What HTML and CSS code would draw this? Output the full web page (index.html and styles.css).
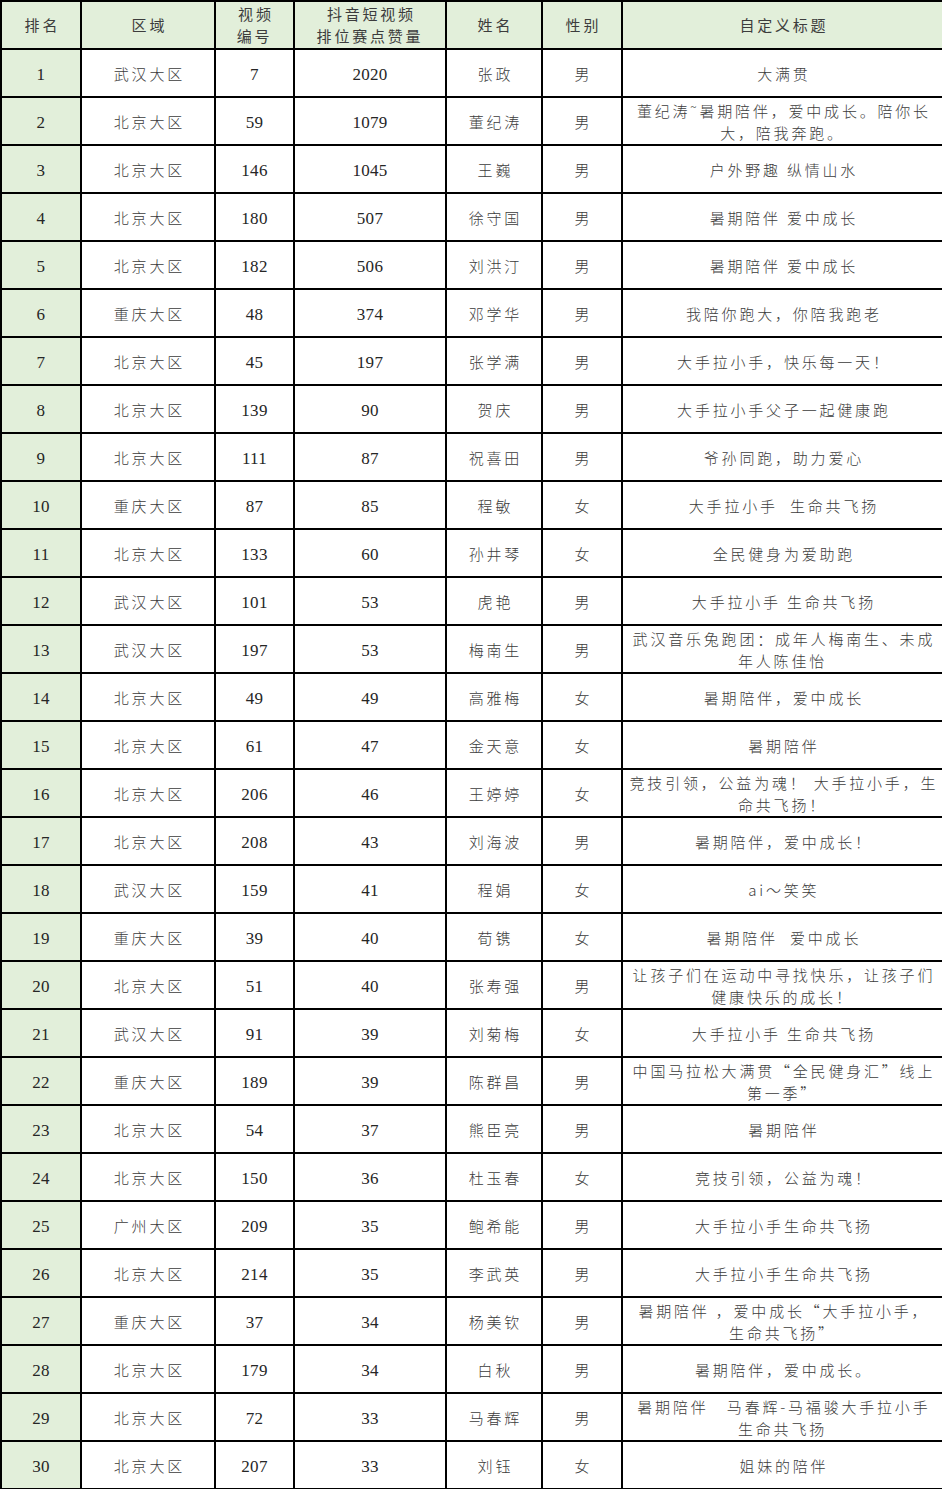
FILE: index.html
```html
<!DOCTYPE html>
<html lang="zh-CN">
<head>
<meta charset="utf-8">
<title>抖音短视频排位赛点赞量</title>
<link rel="stylesheet" href="styles.css">
</head>
<body>
<table class="rank-table">
<colgroup>
<col class="c-rank"><col class="c-region"><col class="c-vid"><col class="c-likes"><col class="c-name"><col class="c-sex"><col class="c-title">
</colgroup>
<thead>
<tr class="head-row">
<th class="cjk">排名</th><th class="cjk">区域</th><th class="cjk">视频<br>编号</th><th class="cjk">抖音短视频<br>排位赛点赞量</th><th class="cjk">姓名</th><th class="cjk">性别</th><th class="cjk">自定义标题</th>
</tr>
</thead>
<tbody>
<tr><td class="num rank">1</td><td class="cjk">武汉大区</td><td class="num">7</td><td class="num">2020</td><td class="cjk">张政</td><td class="cjk">男</td><td class="cjk title">大满贯</td></tr>
<tr><td class="num rank">2</td><td class="cjk">北京大区</td><td class="num">59</td><td class="num">1079</td><td class="cjk">董纪涛</td><td class="cjk">男</td><td class="cjk title">董纪涛˜暑期陪伴，爱中成长。陪你长<br>大，陪我奔跑。</td></tr>
<tr><td class="num rank">3</td><td class="cjk">北京大区</td><td class="num">146</td><td class="num">1045</td><td class="cjk">王巍</td><td class="cjk">男</td><td class="cjk title">户外野趣 纵情山水</td></tr>
<tr><td class="num rank">4</td><td class="cjk">北京大区</td><td class="num">180</td><td class="num">507</td><td class="cjk">徐守国</td><td class="cjk">男</td><td class="cjk title">暑期陪伴 爱中成长</td></tr>
<tr><td class="num rank">5</td><td class="cjk">北京大区</td><td class="num">182</td><td class="num">506</td><td class="cjk">刘洪汀</td><td class="cjk">男</td><td class="cjk title">暑期陪伴 爱中成长</td></tr>
<tr><td class="num rank">6</td><td class="cjk">重庆大区</td><td class="num">48</td><td class="num">374</td><td class="cjk">邓学华</td><td class="cjk">男</td><td class="cjk title">我陪你跑大，你陪我跑老</td></tr>
<tr><td class="num rank">7</td><td class="cjk">北京大区</td><td class="num">45</td><td class="num">197</td><td class="cjk">张学满</td><td class="cjk">男</td><td class="cjk title">大手拉小手，快乐每一天！</td></tr>
<tr><td class="num rank">8</td><td class="cjk">北京大区</td><td class="num">139</td><td class="num">90</td><td class="cjk">贺庆</td><td class="cjk">男</td><td class="cjk title">大手拉小手父子一起健康跑</td></tr>
<tr><td class="num rank">9</td><td class="cjk">北京大区</td><td class="num">111</td><td class="num">87</td><td class="cjk">祝喜田</td><td class="cjk">男</td><td class="cjk title">爷孙同跑，助力爱心</td></tr>
<tr><td class="num rank">10</td><td class="cjk">重庆大区</td><td class="num">87</td><td class="num">85</td><td class="cjk">程敏</td><td class="cjk">女</td><td class="cjk title">大手拉小手  生命共飞扬</td></tr>
<tr><td class="num rank">11</td><td class="cjk">北京大区</td><td class="num">133</td><td class="num">60</td><td class="cjk">孙井琴</td><td class="cjk">女</td><td class="cjk title">全民健身为爱助跑</td></tr>
<tr><td class="num rank">12</td><td class="cjk">武汉大区</td><td class="num">101</td><td class="num">53</td><td class="cjk">虎艳</td><td class="cjk">男</td><td class="cjk title">大手拉小手 生命共飞扬</td></tr>
<tr><td class="num rank">13</td><td class="cjk">武汉大区</td><td class="num">197</td><td class="num">53</td><td class="cjk">梅南生</td><td class="cjk">男</td><td class="cjk title">武汉音乐兔跑团：成年人梅南生、未成<br>年人陈佳怡</td></tr>
<tr><td class="num rank">14</td><td class="cjk">北京大区</td><td class="num">49</td><td class="num">49</td><td class="cjk">高雅梅</td><td class="cjk">女</td><td class="cjk title">暑期陪伴，爱中成长</td></tr>
<tr><td class="num rank">15</td><td class="cjk">北京大区</td><td class="num">61</td><td class="num">47</td><td class="cjk">金天意</td><td class="cjk">女</td><td class="cjk title">暑期陪伴</td></tr>
<tr><td class="num rank">16</td><td class="cjk">北京大区</td><td class="num">206</td><td class="num">46</td><td class="cjk">王婷婷</td><td class="cjk">女</td><td class="cjk title">竞技引领，公益为魂！ 大手拉小手，生<br>命共飞扬！</td></tr>
<tr><td class="num rank">17</td><td class="cjk">北京大区</td><td class="num">208</td><td class="num">43</td><td class="cjk">刘海波</td><td class="cjk">男</td><td class="cjk title">暑期陪伴，爱中成长！</td></tr>
<tr><td class="num rank">18</td><td class="cjk">武汉大区</td><td class="num">159</td><td class="num">41</td><td class="cjk">程娟</td><td class="cjk">女</td><td class="cjk title">ai～笑笑</td></tr>
<tr><td class="num rank">19</td><td class="cjk">重庆大区</td><td class="num">39</td><td class="num">40</td><td class="cjk">荀镌</td><td class="cjk">女</td><td class="cjk title">暑期陪伴  爱中成长</td></tr>
<tr><td class="num rank">20</td><td class="cjk">北京大区</td><td class="num">51</td><td class="num">40</td><td class="cjk">张寿强</td><td class="cjk">男</td><td class="cjk title">让孩子们在运动中寻找快乐，让孩子们<br>健康快乐的成长！</td></tr>
<tr><td class="num rank">21</td><td class="cjk">武汉大区</td><td class="num">91</td><td class="num">39</td><td class="cjk">刘菊梅</td><td class="cjk">女</td><td class="cjk title">大手拉小手 生命共飞扬</td></tr>
<tr><td class="num rank">22</td><td class="cjk">重庆大区</td><td class="num">189</td><td class="num">39</td><td class="cjk">陈群昌</td><td class="cjk">男</td><td class="cjk title">中国马拉松大满贯“全民健身汇”线上<br>第一季”</td></tr>
<tr><td class="num rank">23</td><td class="cjk">北京大区</td><td class="num">54</td><td class="num">37</td><td class="cjk">熊臣亮</td><td class="cjk">男</td><td class="cjk title">暑期陪伴</td></tr>
<tr><td class="num rank">24</td><td class="cjk">北京大区</td><td class="num">150</td><td class="num">36</td><td class="cjk">杜玉春</td><td class="cjk">女</td><td class="cjk title">竞技引领，公益为魂！</td></tr>
<tr><td class="num rank">25</td><td class="cjk">广州大区</td><td class="num">209</td><td class="num">35</td><td class="cjk">鲍希能</td><td class="cjk">男</td><td class="cjk title">大手拉小手生命共飞扬</td></tr>
<tr><td class="num rank">26</td><td class="cjk">北京大区</td><td class="num">214</td><td class="num">35</td><td class="cjk">李武英</td><td class="cjk">男</td><td class="cjk title">大手拉小手生命共飞扬</td></tr>
<tr><td class="num rank">27</td><td class="cjk">重庆大区</td><td class="num">37</td><td class="num">34</td><td class="cjk">杨美钦</td><td class="cjk">男</td><td class="cjk title">暑期陪伴 ，爱中成长“大手拉小手，<br>生命共飞扬”</td></tr>
<tr><td class="num rank">28</td><td class="cjk">北京大区</td><td class="num">179</td><td class="num">34</td><td class="cjk">白秋</td><td class="cjk">男</td><td class="cjk title">暑期陪伴，爱中成长。</td></tr>
<tr><td class="num rank">29</td><td class="cjk">北京大区</td><td class="num">72</td><td class="num">33</td><td class="cjk">马春辉</td><td class="cjk">男</td><td class="cjk title">暑期陪伴   马春辉-马福骏大手拉小手<br>生命共飞扬</td></tr>
<tr><td class="num rank">30</td><td class="cjk">北京大区</td><td class="num">207</td><td class="num">33</td><td class="cjk">刘钰</td><td class="cjk">女</td><td class="cjk title">姐妹的陪伴</td></tr>
</tbody>
</table>
</body>
</html>
```
FILE: styles.css
```css
html, body {
  margin: 0;
  padding: 0;
  background: #ffffff;
}

.rank-table {
  width: 942px;
  table-layout: fixed;
  border-collapse: collapse;
  border: 2px solid #000;
}

.c-rank { width: 80px; }
.c-region { width: 134px; }
.c-vid { width: 79px; }
.c-likes { width: 152px; }
.c-name { width: 96px; }
.c-sex { width: 80px; }
.c-title { width: 321px; }

.rank-table tr {
  height: 48px;
}

.rank-table th,
.rank-table td {
  border: 2px solid #000;
  text-align: center;
  vertical-align: middle;
  padding: 1px 3px 0 3px;
  height: 48px;
  box-sizing: border-box;
  overflow: hidden;
  line-height: 22px;
}

.head-row {
  height: 47px;
}

.head-row th {
  background: #e2efda;
  font-weight: 400;
  height: 47px;
  padding-top: 0;
}

.cjk {
  font-family: "Noto Sans CJK SC", "Noto Sans", sans-serif;
  font-weight: 300;
  font-size: 15px;
  letter-spacing: 2.8px;
  text-indent: 2.8px;
  color: #3c3c3c;
}

.rank-table td.num {
  font-family: "Liberation Serif", "Times New Roman", serif;
  font-size: 17px;
  letter-spacing: 0.3px;
  color: #262626;
  padding-top: 3px;
}

.rank {
  background: #e2efda;
}

.title {
  white-space: pre-wrap;
}
```
